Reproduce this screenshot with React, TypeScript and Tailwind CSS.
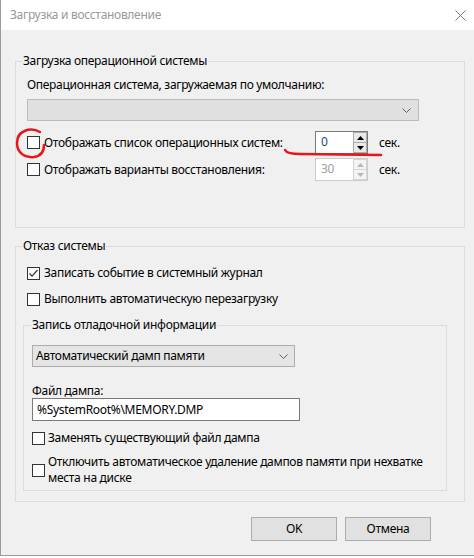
import React from "react";

const font = { fontFamily: '"Noto Sans", "Segoe UI", sans-serif' };

function Box({ checked = false }: { checked?: boolean }) {
  return (
    <span className="relative inline-block w-[13px] h-[13px] border border-[#333333] bg-white shrink-0">
      {checked && (
        <svg className="absolute left-0 top-0" width="11" height="11" viewBox="0 0 11 11">
          <path d="M1.5 5.5 L4 8.2 L9.5 2" fill="none" stroke="#333" strokeWidth="1.2" />
        </svg>
      )}
    </span>
  );
}

function Chevron() {
  return (
    <svg width="9" height="5" viewBox="0 0 9 5">
      <path d="M0.5 0.5 L4.5 4.5 L8.5 0.5" fill="none" stroke="#606060" strokeWidth="1" />
    </svg>
  );
}

function Spin({ value, disabled = false }: { value: string; disabled?: boolean }) {
  return (
    <div className={"flex w-[53px] h-[23px] border bg-white " + (disabled ? "border-[#cccccc]" : "border-[#7a7a7a]")}>
      <div className={"flex-1 pl-[5px] leading-[20px] text-[12px] " + (disabled ? "text-[#a0a0a0]" : "text-[#1c4a88]")}>{value}</div>
      <div className="flex flex-col w-[14px]">
        <div className={"flex-1 flex items-center justify-center border " + (disabled ? "border-[#d5d5d5] bg-[#f4f4f4]" : "border-[#acacac] bg-[#e9e9e9]")}>
          <svg width="7" height="4" viewBox="0 0 7 4"><path d="M0 4 L3.5 0 L7 4 Z" fill={disabled ? "#b8b8b8" : "#000"} /></svg>
        </div>
        <div className={"flex-1 flex items-center justify-center border border-t-0 " + (disabled ? "border-[#d5d5d5] bg-[#f4f4f4]" : "border-[#acacac] bg-[#e9e9e9]")}>
          <svg width="7" height="4" viewBox="0 0 7 4"><path d="M0 0 L3.5 4 L7 0 Z" fill={disabled ? "#b8b8b8" : "#000"} /></svg>
        </div>
      </div>
    </div>
  );
}

export default function App() {
  return (
    <div className="relative w-[474px] h-[558px] bg-white overflow-hidden text-[12px] tracking-[-0.3px] text-black" style={font}>
      <div className="w-[474px] h-[556px] border-l border-b border-[#9a9a9a] bg-[#f0f0f0] flex flex-col">
        {/* Title bar */}
        <div className="h-[30px] bg-white flex items-center justify-between pl-[9px] pr-[8px] shrink-0">
          <span className="text-[12px] text-[#999999]">Загрузка и восстановление</span>
          <svg width="11" height="11" viewBox="0 0 11 11">
            <path d="M0.5 0.5 L10.5 10.5 M10.5 0.5 L0.5 10.5" stroke="#777" strokeWidth="1" />
          </svg>
        </div>

        <div className="pl-[14px] pt-[23px] flex flex-col">
          {/* Group 1 */}
          <fieldset className="w-[450px] border border-[#dcdcdc] m-0 p-0">
            <legend className="ml-[6px] px-[1px] leading-[16px]">Загрузка операционной системы</legend>
            <div className="pl-[11px] pt-[8px] pb-[46px] flex flex-col">
              <div className="leading-[16px]">Операционная система, загружаемая по умолчанию:</div>
              <div className="mt-[6px] w-[392px] h-[22px] border border-[#bcbcbc] bg-[#e0e0e0] flex items-center justify-end pr-[7px]">
                <Chevron />
              </div>
              <div className="mt-[10px] flex items-center h-[23px]">
                <Box />
                <span className="ml-[4px] w-[271px]">Отображать список операционных систем:</span>
                <Spin value="0" />
                <span className="ml-[11px]">сек.</span>
              </div>
              <div className="mt-[4px] flex items-center h-[23px]">
                <Box />
                <span className="ml-[4px] w-[271px]">Отображать варианты восстановления:</span>
                <Spin value="30" disabled />
                <span className="ml-[11px]">сек.</span>
              </div>
            </div>
          </fieldset>

          {/* Group 2 */}
          <fieldset className="mt-[10px] w-[450px] border border-[#dcdcdc] m-0 p-0">
            <legend className="ml-[6px] px-[1px] leading-[16px]">Отказ системы</legend>
            <div className="pl-[7px] pt-[11px] pb-[10px] flex flex-col">
              <div className="ml-[4px] flex items-center h-[16px]">
                <Box checked />
                <span className="ml-[4px]">Записать событие в системный журнал</span>
              </div>
              <div className="ml-[4px] mt-[10px] flex items-center h-[16px]">
                <Box />
                <span className="ml-[4px]">Выполнить автоматическую перезагрузку</span>
              </div>

              <fieldset className="mt-[10px] w-[424px] border border-[#dcdcdc] m-0 p-0">
                <legend className="ml-[7px] px-[1px] leading-[16px]">Запись отладочной информации</legend>
                <div className="pl-[8px] pt-[12px] pb-[4px] flex flex-col">
                  <div className="w-[263px] h-[22px] border border-[#adadad] bg-[#e5e5e5] flex items-center justify-between pl-[3px] pr-[6px]">
                    <span>Автоматический дамп памяти</span>
                    <Chevron />
                  </div>
                  <div className="mt-[16px] leading-[15px]">Файл дампа:</div>
                  <div className="w-[268px] h-[23px] border border-[#7a7a7a] bg-white flex items-center pl-[4px]">
                    %SystemRoot%\MEMORY.DMP
                  </div>
                  <div className="mt-[9px] flex items-center h-[16px]">
                    <Box />
                    <span className="ml-[3px]">Заменять существующий файл дампа</span>
                  </div>
                  <div className="mt-[8px] flex items-center">
                    <Box />
                    <div className="ml-[3px] flex flex-col">
                      <span className="leading-[16px]">Отключить автоматическое удаление дампов памяти при нехватке</span>
                      <span className="leading-[16px]">места на диске</span>
                    </div>
                  </div>
                </div>
              </fieldset>
            </div>
          </fieldset>

          {/* Buttons */}
          <div className="mt-[15px] w-[416px] flex justify-end gap-[8px]">
            <button className="w-[86px] h-[24px] border border-[#adadad] bg-[#e1e1e1] text-[12px]">OK</button>
            <button className="w-[86px] h-[24px] border border-[#adadad] bg-[#e1e1e1] text-[12px]">Отмена</button>
          </div>
        </div>
      </div>

      {/* Red annotations */}
      <svg className="absolute left-0 top-0 pointer-events-none" width="474" height="558" viewBox="0 0 474 558">
        <path d="M40 132 C31 127 17 130 17 143 C17 153 25 158 34 157 C41 156 44 152 44 145"
          fill="none" stroke="#e8161b" strokeWidth="2.5" strokeLinecap="round" />
        <path d="M285 150 Q287 154 300 154 L381 155" fill="none" stroke="#e8161b" strokeWidth="2.5" strokeLinecap="round" />
      </svg>
    </div>
  );
}
